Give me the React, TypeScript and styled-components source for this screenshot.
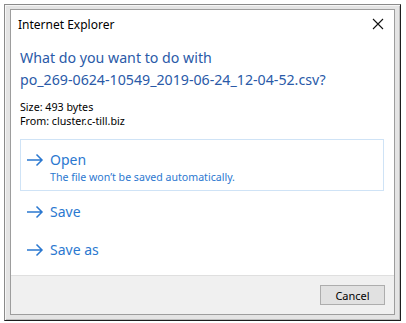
import * as React from 'react';
import styled, { createGlobalStyle } from 'styled-components';

const GlobalStyle = createGlobalStyle`
  html, body {
    margin: 0;
    padding: 0;
    background: #ffffff;
  }
  body {
    font-family: "Noto Sans", "Open Sans", Arial, sans-serif;
  }
`;

const Page = styled.div`
  width: 406px;
  height: 323px;
  padding: 4px 0 0 4px;
  box-sizing: border-box;
`;

// Outer window chrome
const Frame = styled.div`
  width: 397px;
  height: 317px;
  box-sizing: border-box;
  border: 1px solid;
  border-color: #8a8a8a #1e1e1e #1e1e1e #8a8a8a;
  background: #e4e4e4;
  padding: 4px 5px 5px 5px;
  box-shadow: inset 1px 1px 0 #f6f6f6, inset -1px -1px 0 #bdbdbd;
`;

const Dialog = styled.div`
  height: 100%;
  box-sizing: border-box;
  border: 1px solid #9d9d9d;
  background: #ffffff;
  display: flex;
  flex-direction: column;
`;

const TitleBar = styled.div`
  flex-shrink: 0;
  display: flex;
  align-items: center;
  justify-content: space-between;
  height: 28px;
  padding: 0 8px 0 7px;
`;

const TitleText = styled.span`
  font-size: 12px;
  color: #000000;
`;

const CloseButton = styled.button`
  border: none;
  background: transparent;
  padding: 0;
  width: 16px;
  height: 16px;
  display: flex;
  align-items: center;
  justify-content: center;
`;

const Body = styled.div`
  flex: 1;
  min-height: 0;
  display: flex;
  flex-direction: column;
  padding: 9px 10px 0 9px;
`;

const Heading = styled.h1`
  margin: 0;
  font-weight: 400;
  font-size: 14.2px;
  line-height: 22px;
  color: #2a5aa8;
`;

const Meta = styled.div`
  margin-top: 9px;
  font-size: 10.7px;
  line-height: 14px;
  color: #000000;
`;

const Options = styled.div`
  margin-top: 11px;
  display: flex;
  flex-direction: column;
`;

const Option = styled.div<{ $highlight?: boolean }>`
  display: flex;
  align-items: flex-start;
  gap: 6px;
  box-sizing: border-box;
  border: 1px solid ${({ $highlight }) => ($highlight ? '#cfe3f6' : 'transparent')};
  padding: 11px 8px 8px 5px;
  height: ${({ $highlight }) => ($highlight ? '52px' : '38px')};
  color: #2b78d0;
`;

const OptionText = styled.div`
  display: flex;
  flex-direction: column;
`;

const OptionLabel = styled.span`
  font-size: 14px;
  line-height: 18px;
`;

const OptionHint = styled.span`
  margin-top: 1px;
  font-size: 10.6px;
  line-height: 15px;
`;

const Footer = styled.div`
  flex-shrink: 0;
  height: 38px;
  background: #f0f0f0;
  border-top: 1px solid #dfdfdf;
  display: flex;
  align-items: center;
  justify-content: flex-end;
  padding: 0 9px;
`;

const Button = styled.button`
  width: 65px;
  height: 20px;
  box-sizing: border-box;
  border: 1px solid #adadad;
  background: #e1e1e1;
  font-family: "Noto Sans", "Open Sans", Arial, sans-serif;
  font-size: 11px;
  color: #000000;
  padding: 0;
`;

const Arrow = () => (
  <svg width="18" height="18" viewBox="0 0 18 18" style={{ flexShrink: 0 }}>
    <path d="M1 9 H16 M10.5 3.5 L16 9 L10.5 14.5" fill="none" stroke="#2b78d0" strokeWidth="1.5" />
  </svg>
);

export default function App() {
  return (
    <>
      <GlobalStyle />
      <Page>
        <Frame>
          <Dialog>
            <TitleBar>
              <TitleText>Internet Explorer</TitleText>
              <CloseButton aria-label="Close">
                <svg width="12" height="12" viewBox="0 0 12 12">
                  <path d="M1 1 L11 11 M11 1 L1 11" stroke="#111" strokeWidth="1.1" />
                </svg>
              </CloseButton>
            </TitleBar>
            <Body>
              <Heading>
                What do you want to do with
                <br />
                po_269-0624-10549_2019-06-24_12-04-52.csv?
              </Heading>
              <Meta>
                Size: 493 bytes
                <br />
                From: cluster.c-till.biz
              </Meta>
              <Options>
                <Option $highlight>
                  <Arrow />
                  <OptionText>
                    <OptionLabel>Open</OptionLabel>
                    <OptionHint>The file won’t be saved automatically.</OptionHint>
                  </OptionText>
                </Option>
                <Option>
                  <Arrow />
                  <OptionText>
                    <OptionLabel>Save</OptionLabel>
                  </OptionText>
                </Option>
                <Option>
                  <Arrow />
                  <OptionText>
                    <OptionLabel>Save as</OptionLabel>
                  </OptionText>
                </Option>
              </Options>
            </Body>
            <Footer>
              <Button>Cancel</Button>
            </Footer>
          </Dialog>
        </Frame>
      </Page>
    </>
  );
}
